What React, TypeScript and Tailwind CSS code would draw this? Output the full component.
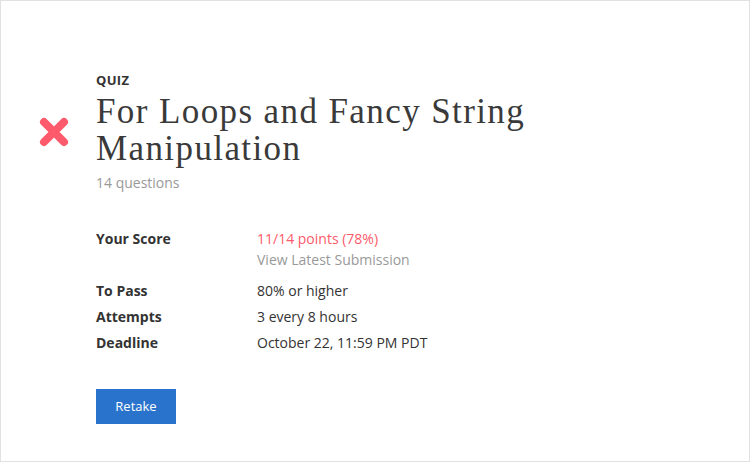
const rows = [
  { label: 'To Pass', value: '80% or higher' },
  { label: 'Attempts', value: '3 every 8 hours' },
  { label: 'Deadline', value: 'October 22, 11:59 PM PDT' },
];

function FailIcon() {
  return (
    <svg width="30" height="30" viewBox="0 0 30 30" className="block">
      <path
        d="M5 5 L25 25 M25 5 L5 25"
        stroke="#fd5a6b"
        strokeWidth="8"
        strokeLinecap="round"
        fill="none"
      />
    </svg>
  );
}

export default function App() {
  return (
    <div className="h-[462px] w-[750px] border border-[#e1e1e1] bg-white font-['Open_Sans',sans-serif] text-[#333]">
      <div className="flex pt-[70px]">
        {/* status icon column */}
        <div className="w-[95px] shrink-0 pl-[38px] pt-[46px]">
          <FailIcon />
        </div>

        <div className="flex-1">
          <p className="text-[13px] font-bold leading-[18px] tracking-[0.3px]">QUIZ</p>
          <h1 className="mt-[4px] w-[470px] font-['Liberation_Serif',serif] text-[35px] leading-[37px] tracking-[1.4px] text-[#3a3a3a]">
            For Loops and Fancy String Manipulation
          </h1>
          <p className="mt-[6px] text-sm leading-5 text-[#999]">14 questions</p>

          <div className="mt-[35px] flex flex-col gap-[5px] text-sm leading-[21px]">
            <div className="mb-[5px] flex">
              <div className="w-[161px] font-bold">Your Score</div>
              <div>
                <div className="text-[#fd5a6b]">11/14 points (78%)</div>
                <div className="text-[#999]">View Latest Submission</div>
              </div>
            </div>
            {rows.map((row) => (
              <div key={row.label} className="flex">
                <div className="w-[161px] font-bold">{row.label}</div>
                <div>{row.value}</div>
              </div>
            ))}
          </div>

          <button className="mt-[36px] h-[35px] w-[80px] bg-[#2a73cc] text-[13px] text-white">
            Retake
          </button>
        </div>
      </div>
    </div>
  );
}
